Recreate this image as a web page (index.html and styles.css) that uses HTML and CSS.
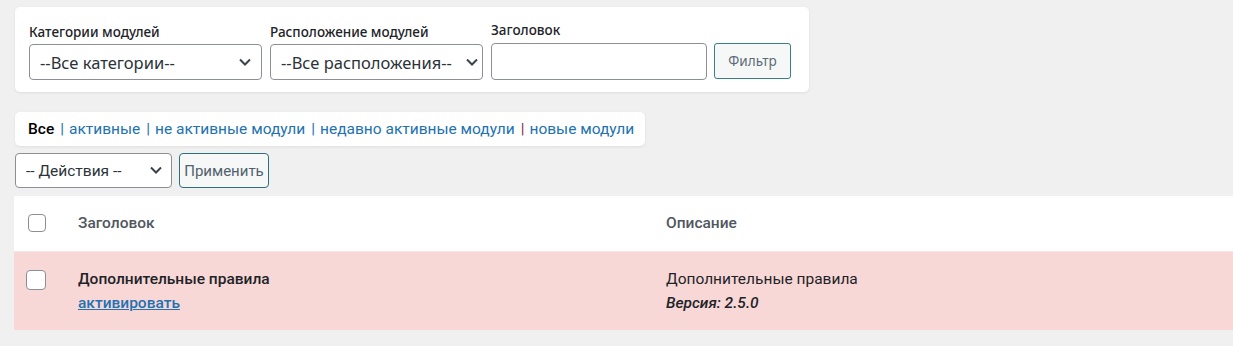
FILE: index.html
```html
<!DOCTYPE html>
<html lang="ru">
<head>
    <meta charset="UTF-8">
    <meta name="viewport" content="width=device-width, initial-scale=1.0">
    <title>Модули</title>
    <link rel="stylesheet" href="styles.css">
</head>
<body>
    <div class="wrap">
        <form class="filter-box">
            <div class="filter-field">
                <label for="category">Категории модулей</label>
                <div class="select-box cat-select">
                    <select id="category"><option>--Все категории--</option></select>
                    <svg class="chevron" viewBox="0 0 14 14"><path d="M2 4.5l5 5 5-5" /></svg>
                </div>
            </div>
            <div class="filter-field">
                <label for="position">Расположение модулей</label>
                <div class="select-box pos-select">
                    <select id="position"><option>--Все расположения--</option></select>
                    <svg class="chevron" viewBox="0 0 14 14"><path d="M2 4.5l5 5 5-5" /></svg>
                </div>
            </div>
            <div class="filter-field">
                <label for="title">Заголовок</label>
                <input type="text" id="title" class="title-input">
            </div>
            <button type="button" class="filter-button">Фильтр</button>
        </form>

        <ul class="status-links">
            <li class="current">Все</li>
            <li><a href="#">активные</a></li>
            <li><a href="#">не активные модули</a></li>
            <li><a href="#">недавно активные модули</a></li>
            <li><a href="#">новые модули</a></li>
        </ul>

        <div class="bulk-actions">
            <div class="select-box action-select">
                <select><option>-- Действия --</option></select>
                <svg class="chevron" viewBox="0 0 14 14"><path d="M2 4.5l5 5 5-5" /></svg>
            </div>
            <button type="button" class="apply-button">Применить</button>
        </div>
    </div>

    <table class="modules-table">
        <thead>
            <tr>
                <th class="check-col"><span class="checkbox small"></span></th>
                <th class="title-col">Заголовок</th>
                <th>Описание</th>
            </tr>
        </thead>
        <tbody>
            <tr class="inactive">
                <td class="check-col"><span class="checkbox"></span></td>
                <td class="title-col">
                    <strong>Дополнительные правила</strong>
                    <a href="#" class="activate-link">активировать</a>
                </td>
                <td>
                    <p>Дополнительные правила</p>
                    <em class="version">Версия: 2.5.0</em>
                </td>
            </tr>
        </tbody>
    </table>
</body>
</html>
```

FILE: styles.css
```css
/* Basic reset */
* {
    margin: 0;
    padding: 0;
    box-sizing: border-box;
}

body {
    background-color: #f0f0f1;
    color: #1d2327;
    font-family: Roboto, "Noto Sans", sans-serif;
    overflow: hidden;
}

.wrap {
    padding: 7px 0 0 15px;
}

/* Filter box */
.filter-box {
    display: flex;
    align-items: flex-end;
    gap: 8px;
    width: 794px;
    padding: 14px 14px 12px;
    background-color: #fff;
    border-radius: 5px;
    box-shadow: 0 1px 3px rgba(0, 0, 0, 0.08);
    font-family: "Noto Sans", "Open Sans", sans-serif;
}

.filter-field {
    display: flex;
    flex-direction: column;
}

.filter-field label {
    font-size: 13.5px;
    font-weight: 500;
    line-height: 19px;
    padding-bottom: 2px;
    color: #1d2327;
}

.select-box {
    position: relative;
}

.select-box select {
    appearance: none;
    width: 100%;
    height: 36px;
    padding: 0 30px 0 10px;
    border: 1px solid #8c8f94;
    border-radius: 4px;
    background-color: #fff;
    color: #2c3338;
    font-family: inherit;
    font-size: 16.5px;
}

.chevron {
    position: absolute;
    right: 10px;
    top: 11px;
    width: 14px;
    height: 14px;
    fill: none;
    stroke: #3c434a;
    stroke-width: 2;
    pointer-events: none;
}

.cat-select {
    width: 233px;
}

.pos-select {
    width: 213px;
}

.pos-select .chevron {
    right: 4px;
}

.pos-select select {
    padding: 0 18px 0 10px;
}

.title-input {
    width: 216px;
    height: 37px;
    border: 1px solid #8c8f94;
    border-radius: 4px;
    margin-top: 1px;
}

.filter-button {
    width: 77px;
    height: 36px;
    margin-left: -1px;
    margin-bottom: 1px;
    border: 1px solid #387f8a;
    border-radius: 3px;
    background-color: #f6f7f7;
    color: #5d6d78;
    font-family: inherit;
    font-size: 13.5px;
}

/* Status links */
.status-links {
    display: inline-flex;
    list-style: none;
    margin-top: 20px;
    height: 34px;
    align-items: center;
    padding: 0 11px 0 13px;
    background-color: #fff;
    border-radius: 5px;
    box-shadow: 0 1px 3px rgba(0, 0, 0, 0.08);
    font-size: 15.5px;
}

.status-links li + li::before {
    content: "|";
    margin: 0 5px 0 6px;
    color: #2271b1;
}

.status-links li:last-child::before {
    color: #8a2c4a;
}

.status-links .current {
    color: #000;
    font-weight: 500;
}

.status-links a {
    color: #2271b1;
    text-decoration: none;
}

/* Bulk actions */
.bulk-actions {
    display: flex;
    gap: 7px;
    margin-top: 7px;
}

.action-select {
    width: 157px;
}

.action-select select {
    height: 35px;
    font-family: Roboto, sans-serif;
    font-size: 15.5px;
    color: #2c3338;
}

.action-select .chevron {
    top: 10px;
    right: 9px;
}

.apply-button {
    width: 90px;
    height: 35px;
    border: 1px solid #2f6f7a;
    border-radius: 4px;
    background-color: #f6f7f7;
    color: #50626e;
    font-family: Roboto, sans-serif;
    font-size: 15px;
}

/* Table */
.modules-table {
    margin: 8px 0 0 14px;
    width: calc(100% - 14px);
    border-collapse: collapse;
    background-color: #fff;
    font-size: 15.5px;
}

.modules-table th {
    height: 55px;
    text-align: left;
    font-weight: 500;
    color: #50575e;
    vertical-align: middle;
}

.check-col {
    width: 64px;
    padding-left: 12px;
}

.title-col {
    width: 588px;
}

.checkbox {
    display: block;
    width: 20px;
    height: 20px;
    border: 1px solid #8c8f94;
    border-radius: 4px;
    background-color: #fff;
}

.checkbox.small {
    width: 18px;
    height: 18px;
    margin-left: 2px;
}

.inactive {
    background-color: #f8d7d7;
    border-top: 1px solid #f0e6e6;
    border-bottom: 1px solid #eee;
}

.inactive td {
    height: 79px;
    vertical-align: top;
    padding-top: 17px;
    color: #1d2327;
}

.inactive .check-col {
    padding-top: 18px;
}

.inactive strong {
    display: block;
    font-weight: 500;
    line-height: 20px;
}

.activate-link {
    display: inline-block;
    margin-top: 4px;
    color: #2271b1;
    font-weight: 500;
    line-height: 20px;
}

.inactive p {
    line-height: 20px;
}

.version {
    display: block;
    margin-top: 4px;
    font-weight: 500;
    line-height: 20px;
}
```
